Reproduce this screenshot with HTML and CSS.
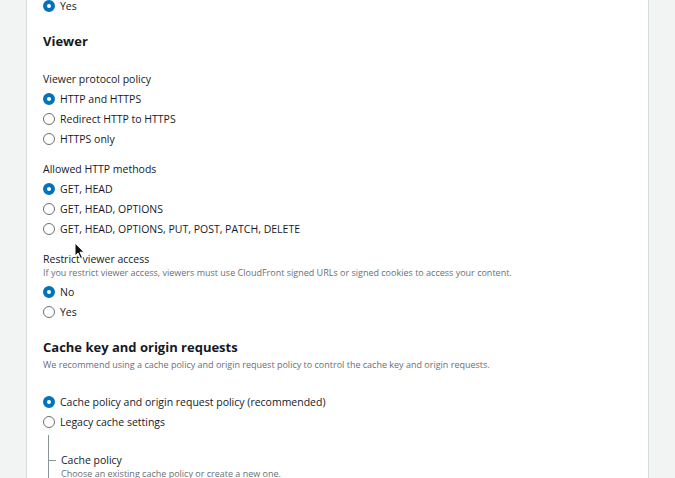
FILE: index.html
```html
<!DOCTYPE html>
<html>
<head>
<meta charset="utf-8">
<link rel="stylesheet" href="styles.css">
</head>
<body>
<div class="panel">
  <div class="radio first checked"><span class="dot"></span><span>Yes</span></div>

  <h2 class="heading h-viewer">Viewer</h2>

  <div class="label l-first">Viewer protocol policy</div>
  <div class="radio checked"><span class="dot"></span><span>HTTP and HTTPS</span></div>
  <div class="radio"><span class="dot"></span><span>Redirect HTTP to HTTPS</span></div>
  <div class="radio"><span class="dot"></span><span>HTTPS only</span></div>

  <div class="label l-group">Allowed HTTP methods</div>
  <div class="radio checked"><span class="dot"></span><span>GET, HEAD</span></div>
  <div class="radio"><span class="dot"></span><span>GET, HEAD, OPTIONS</span></div>
  <div class="radio"><span class="dot"></span><span>GET, HEAD, OPTIONS, PUT, POST, PATCH, DELETE</span></div>

  <div class="label l-restrict">Restrict viewer access</div>
  <div class="desc">If you restrict viewer access, viewers must use CloudFront signed URLs or signed cookies to access your content.</div>
  <div class="radio r-after-desc checked"><span class="dot"></span><span>No</span></div>
  <div class="radio"><span class="dot"></span><span>Yes</span></div>

  <h2 class="heading h-cache">Cache key and origin requests</h2>
  <div class="desc desc-cache">We recommend using a cache policy and origin request policy to control the cache key and origin requests.</div>
  <div class="radio r-cache checked"><span class="dot"></span><span>Cache policy and origin request policy (recommended)</span></div>
  <div class="radio"><span class="dot"></span><span>Legacy cache settings</span></div>

  <div class="nested">
    <div class="nested-label"><span class="tick"></span><span>Cache policy</span></div>
    <div class="desc nested-desc">Choose an existing cache policy or create a new one.</div>
  </div>
</div>
<svg class="cursor" width="12" height="18" viewBox="0 0 12 18">
  <path d="M1 1 L1 14 L4 11 L6.5 16.5 L8.5 15.6 L6 10.2 L10 10.2 Z" fill="#111" stroke="#fff" stroke-width="1"/>
</svg>
</body>
</html>
```
FILE: styles.css
```css
html, body {
  margin: 0;
  padding: 0;
}
body {
  background: #f2f3f3;
  font-family: "Open Sans", "Liberation Sans", sans-serif;
  color: #16191f;
  overflow: hidden;
  height: 478px;
  position: relative;
}
.panel {
  margin-left: 26px;
  width: 605px;
  height: 478px;
  overflow: hidden;
  background: #ffffff;
  border-left: 1px solid #d5dbdb;
  border-right: 1px solid #d5dbdb;
  padding-left: 16px;
  box-sizing: content-box;
}
.radio {
  display: flex;
  align-items: center;
  height: 20px;
  font-size: 10.5px;
  gap: 5px;
}
.radio.first {
  margin-top: -4px;
}
.dot {
  width: 10px;
  height: 10px;
  border-radius: 50%;
  border: 1px solid #687078;
  box-sizing: content-box;
  flex: none;
}
.radio.checked .dot {
  width: 4px;
  height: 4px;
  border: 4px solid #0073bb;
  background: #fff;
}
.heading {
  margin: 0;
  font-size: 13px;
  font-weight: 700;
  line-height: 20px;
}
.h-viewer {
  margin-top: 15px;
}
.h-cache {
  margin-top: 15px;
}
.label {
  font-size: 10.5px;
  line-height: 20px;
}
.l-first {
  margin-top: 18px;
}
.l-group {
  margin-top: 10px;
}
.l-restrict {
  margin-top: 12px;
  line-height: 16px;
}
.desc {
  font-size: 9px;
  line-height: 12px;
  color: #687078;
}
.r-after-desc {
  margin-top: 3px;
}
.desc-cache {
  line-height: 14px;
  margin-top: 1px;
}
.r-cache {
  margin-top: 20px;
}
.nested {
  margin-top: 3px;
  margin-left: 5px;
  border-left: 1px solid #879596;
  padding-top: 17px;
  padding-bottom: 20px;
}
.nested-label {
  display: flex;
  align-items: center;
  font-size: 10.5px;
  line-height: 16px;
  gap: 5px;
}
.tick {
  width: 7px;
  height: 1px;
  background: #879596;
  flex: none;
}
.nested-desc {
  padding-left: 12px;
}
.cursor {
  position: absolute;
  left: 74px;
  top: 242px;
}
```
